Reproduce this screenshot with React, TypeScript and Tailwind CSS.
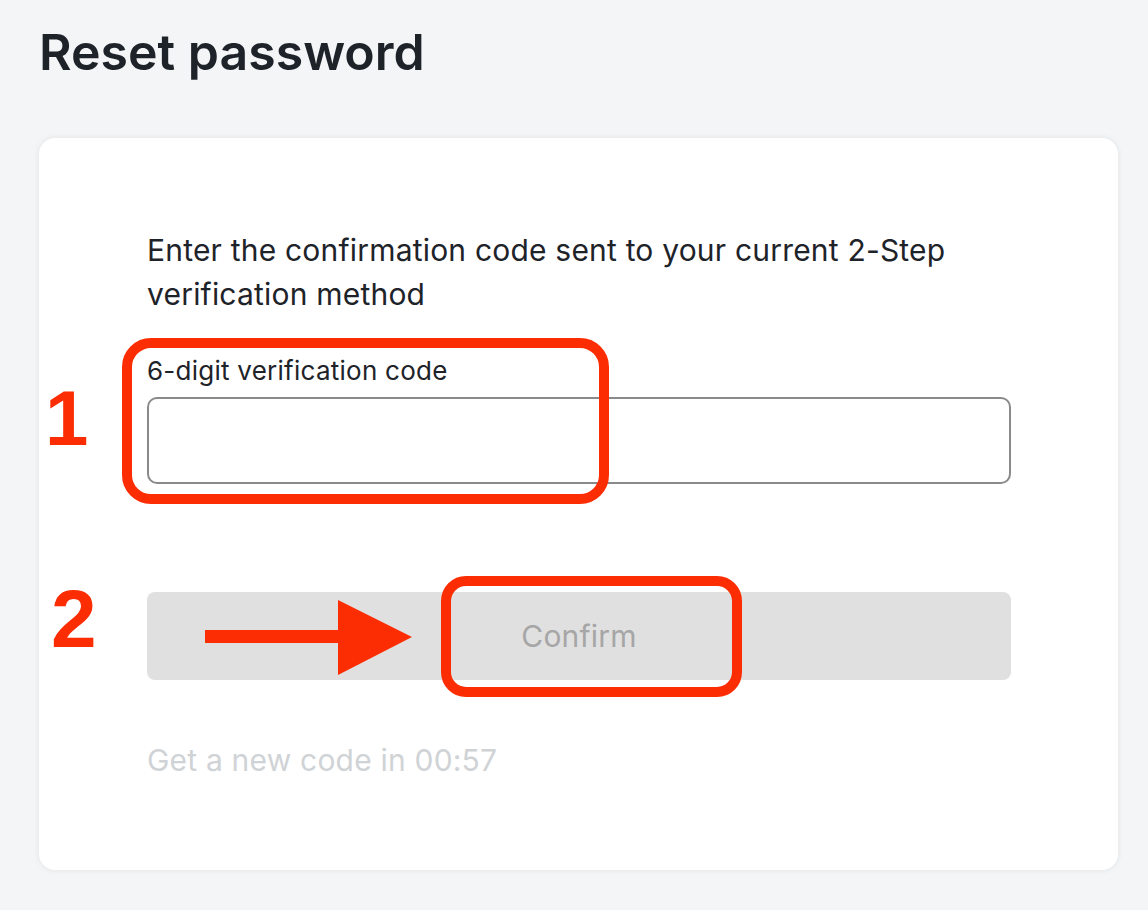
import React from 'react';

const RED = '#fc2c03';

function Annotations() {
  return (
    <>
      <svg
        className="absolute left-0 top-0 pointer-events-none"
        width={1148}
        height={910}
        viewBox="0 0 1148 910"
      >
        <rect x={127} y={343} width={477} height={156} rx={24} fill="none" stroke={RED} strokeWidth={10} />
        <rect x={446} y={581} width={291} height={111} rx={20} fill="none" stroke={RED} strokeWidth={10} />
        <rect x={205} y={630} width={140} height={13} fill={RED} />
        <polygon points="338,600 412,637 338,675" fill={RED} />
      </svg>
      <span className="absolute left-[45px] top-[373px] text-[78px] leading-[90px] font-bold text-[#fc2c03] font-['Liberation_Sans',sans-serif]">
        1
      </span>
      <span className="absolute left-[51px] top-[574px] text-[82px] leading-[90px] font-bold text-[#fc2c03] font-['Liberation_Sans',sans-serif]">
        2
      </span>
    </>
  );
}

export default function App() {
  return (
    <div className="relative w-[1148px] h-[910px] overflow-hidden bg-[#f3f5f7] font-['Inter',sans-serif]">
      <div className="px-[39px] pt-[22px]">
        <h1 className="text-[50px] leading-[60px] font-semibold text-[#1e2329]">Reset password</h1>

        <div className="mt-[56px] w-[1079px] h-[732px] bg-white rounded-[16px] shadow-[0_0_6px_rgba(0,0,0,0.08)] pl-[108px] pt-[90px]">
          <div className="w-[864px]">
            <p className="text-[30px] leading-[44px] tracking-[0.2px] text-[#1e2329]">
              Enter the confirmation code sent to your current 2-Step verification method
            </p>

            <label className="block mt-[40px] text-[26px] leading-[30px] tracking-[0.25px] text-[#1e2329]">
              6-digit verification code
            </label>
            <div className="mt-[11px] h-[87px] rounded-[10px] border-2 border-[#8a8a8a]" />

            <button className="mt-[108px] w-full h-[88px] rounded-[8px] bg-[#e0e0e0] text-[30px] tracking-[0.2px] text-[#a6a6a6]">
              Confirm
            </button>

            <p className="mt-[60px] text-[30px] leading-[40px] tracking-[0.2px] text-[#d0d3d6]">Get a new code in 00:57</p>
          </div>
        </div>
      </div>
      <Annotations />
    </div>
  );
}
